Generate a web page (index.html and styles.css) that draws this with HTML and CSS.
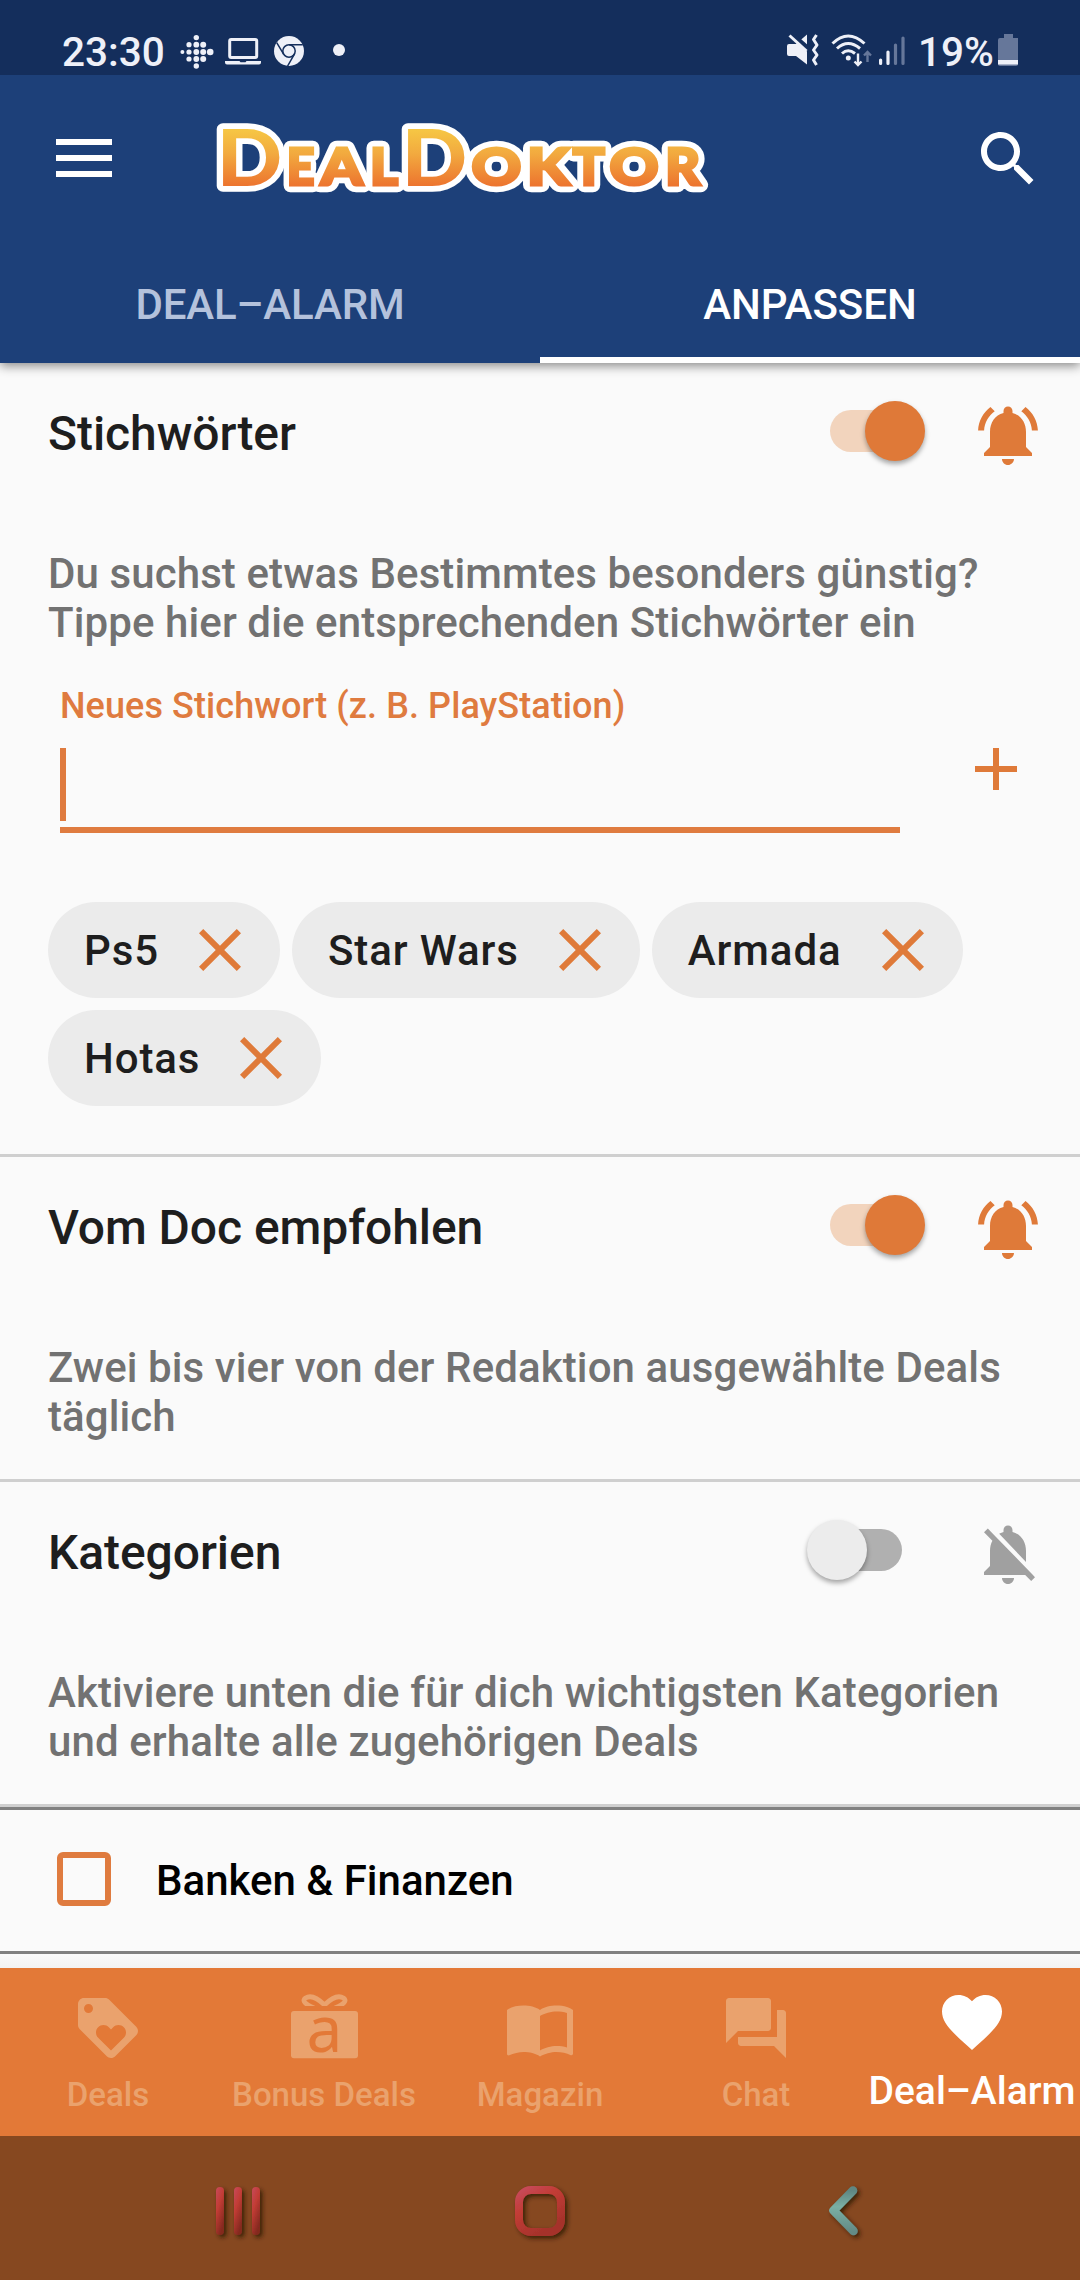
FILE: index.html
```html
<!DOCTYPE html>
<html lang="de">
<head>
<meta charset="utf-8">
<title>DealDoktor</title>
<link rel="stylesheet" href="styles.css">
</head>
<body>
<div class="screen">
  <header class="header">
    <div class="status">
      <span class="clock">23:30</span>
      <svg class="st-fitbit" width="34" height="36" viewBox="0 0 34 36" fill="#eef0f8">
        <circle cx="2.4" cy="18" r="2"/><circle cx="9" cy="10.7" r="2.6"/><circle cx="9" cy="18" r="2.6"/><circle cx="9" cy="25" r="2.6"/>
        <circle cx="16.3" cy="3.6" r="2.7"/><circle cx="16.3" cy="10.7" r="2.9"/><circle cx="16.3" cy="18" r="2.9"/><circle cx="16.3" cy="25" r="2.9"/><circle cx="16.3" cy="32" r="2.7"/>
        <circle cx="23.2" cy="10.7" r="3"/><circle cx="23.2" cy="18" r="3"/><circle cx="23.2" cy="25" r="3"/><circle cx="30.2" cy="18" r="3.3"/>
      </svg>
      <svg class="st-laptop" width="36" height="28" viewBox="0 0 36 28">
        <rect x="4.7" y="1.5" width="27" height="18" rx="1.5" fill="none" stroke="#eef0f8" stroke-width="3"/>
        <path d="M0 23h14.5l1 1.2h5l1-1.2H36v1.5a2 2 0 0 1-2 2H2a2 2 0 0 1-2-2z" fill="#eef0f8"/>
      </svg>
      <svg class="st-chrome" width="30" height="30" viewBox="0 0 30 30">
        <circle cx="15" cy="15" r="15" fill="#eef0f8"/>
        <g fill="none" stroke="#142e5c" stroke-width="1.5"><circle cx="15" cy="15" r="6.2"/><path d="M15 8.8H28.8M9.6 18.1 2.7 6.6M20.4 18.1 13.6 30"/></g>
      </svg>
      <span class="st-dot"></span>
      <div class="status-right">
        <svg width="32" height="32" viewBox="0 0 32 32">
          <path d="M0 12q0-2 2-2h7l11-9.500v30L9 22H2q-2 0-2-2z" fill="#eef0f8"/>
          <path d="M4 0 23 16.500" stroke="#142e5c" stroke-width="5.500"/>
          <path d="M2.500 1.500 19.500 17" stroke="#eef0f8" stroke-width="3"/>
          <path d="M29.500 1 26.500 5.500 30 11 26.500 16 30 21 26.500 26 29.500 31" fill="none" stroke="#eef0f8" stroke-width="3" stroke-linejoin="round"/>
        </svg>
        <svg class="st-wifi" width="42" height="34" viewBox="0 0 42 34">
          <g fill="none" stroke="#eef0f8" stroke-width="3"><path d="M1.500 9.500Q17-5.500 33.500 9.500M6 14.500Q17 4.500 29 14.500M11 19.500Q17 14 24 19.500"/></g>
          <circle cx="17.300" cy="24" r="2.500" fill="#eef0f8"/>
          <path d="M27 19.500V31M23.500 27.500l3.500 3.500 3.500-3.500" fill="none" stroke="#eef0f8" stroke-width="2.400"/>
          <path d="M36.500 28V18M33 21.500l3.500-3.500 3.500 3.500" fill="none" stroke="#66779a" stroke-width="2.400"/>
        </svg>
        <svg class="st-signal" width="28" height="30" viewBox="0 0 28 30" stroke-linecap="round" stroke-width="3.200">
          <path d="M2.600 24v3.500M10 16v11.500" stroke="#eef0f8"/><path d="M17.500 9v18.500M25 2v25.500" stroke="#66779a"/>
        </svg>
        <span class="percent">19%</span>
        <svg class="st-battery" width="20" height="32" viewBox="0 0 20 32">
          <path d="M6 0h9v4h5v26q0 2-2 2H2q-2 0-2-2V6q0-2 2-2h4z" fill="#66779a"/><rect y="26" width="20" height="4.500" fill="#eef0f8"/>
        </svg>
      </div>
    </div>
    <div class="appbar">
      <svg class="menu" width="56" height="38" viewBox="0 0 56 38" fill="#fff"><path d="M0 0h56v6H0zM0 16h56v6H0zM0 32h56v6H0z"/></svg>
      <svg class="logo" width="500" height="80" viewBox="0 0 500 80">
        <defs>
          <linearGradient id="gold" gradientUnits="userSpaceOnUse" x1="0" y1="10" x2="0" y2="69"><stop offset="0" stop-color="#f6c644"/><stop offset=".4" stop-color="#f2aa3f"/><stop offset="1" stop-color="#ec6f2d"/></linearGradient>
          <g id="initials" class="initials">
            <text x=".6" y="66" textLength="65.800" lengthAdjust="spacingAndGlyphs">D</text>
            <text x="185.600" y="66" textLength="65.800" lengthAdjust="spacingAndGlyphs">D</text>
          </g>
          <g id="letters" class="letters">
            <text x="70.800" y="64.500" textLength="27.700" lengthAdjust="spacingAndGlyphs">E</text>
            <text x="104.800" y="64.500" textLength="42" lengthAdjust="spacingAndGlyphs">A</text>
            <text x="154" y="64.500" textLength="28" lengthAdjust="spacingAndGlyphs">L</text>
            <text x="255.500" y="64.500" textLength="49.800" lengthAdjust="spacingAndGlyphs">O</text>
            <text x="311" y="64.500" textLength="42.500" lengthAdjust="spacingAndGlyphs">K</text>
            <text x="356.800" y="64.500" textLength="32" lengthAdjust="spacingAndGlyphs">T</text>
            <text x="393.500" y="64.500" textLength="49.200" lengthAdjust="spacingAndGlyphs">O</text>
            <text x="449.200" y="64.500" textLength="35" lengthAdjust="spacingAndGlyphs">R</text>
          </g>
        </defs>
        <g fill="#fff" stroke="#fff" stroke-linejoin="round"><use href="#initials" stroke-width="11.500"/><use href="#letters" stroke-width="14.500"/></g>
        <use href="#initials" fill="url(#gold)"/>
        <use href="#letters" fill="url(#gold)" stroke="url(#gold)" stroke-width="3"/>
      </svg>
      <svg class="icon search" viewBox="0 0 24 24"><path d="M15.500 14h-.79l-.28-.27C15.410 12.590 16 11.110 16 9.500 16 5.910 13.090 3 9.500 3S3 5.910 3 9.500 5.910 16 9.500 16c1.610 0 3.090-.59 4.230-1.570l.27.28v.79l5 4.990L20.490 19l-4.990-5zm-6 0C7.010 14 5 11.990 5 9.500S7.010 5 9.500 5 14 7.010 14 9.500 11.990 14 9.500 14z"/></svg>
    </div>
    <nav class="tabs">
      <div class="tab"><span class="t-deal">DEAL–ALARM</span></div>
      <div class="tab active"><span>ANPASSEN</span></div>
    </nav>
  </header>

  <main class="content">
    <section class="section s1">
      <div class="head"><h2>Stichwörter</h2><span class="switch on"><i></i></span>
        <svg class="icon bell" viewBox="0 0 24 24"><path d="M7.580 4.080L6.150 2.650C3.750 4.480 2.170 7.300 2.030 10.500h2c.15-2.650 1.510-4.970 3.550-6.420zm12.390 6.420h2c-.15-3.200-1.730-6.020-4.120-7.850l-1.420 1.430c2.020 1.450 3.390 3.770 3.540 6.420zM18 11c0-3.070-1.640-5.640-4.500-6.320V4c0-.83-.67-1.500-1.500-1.500s-1.500.67-1.500 1.500v.68C7.630 5.360 6 7.920 6 11v5l-2 2v1h16v-1l-2-2v-5zm-6 11c.14 0 .27-.01.4-.04.65-.14 1.180-.58 1.440-1.180.1-.24.150-.500.150-.780h-4c.01 1.100.9 2 2.010 2z"/></svg></div>
      <p>Du suchst etwas Bestimmtes besonders günstig?<br>Tippe hier die entsprechenden Stichwörter ein</p>
      <div class="entry">
        <div class="field"><label>Neues Stichwort (z. B. PlayStation)</label><span class="caret"></span></div>
        <svg class="icon add" viewBox="0 0 24 24"><path d="M19 13h-6v6h-2v-6H5v-2h6V5h2v6h6v2z"/></svg>
      </div>
      <div class="chips">
        <span class="chip">Ps5<svg class="icon" viewBox="0 0 24 24"><path d="M19 6.410L17.590 5 12 10.590 6.410 5 5 6.410 10.590 12 5 17.590 6.410 19 12 13.410 17.590 19 19 17.590 13.410 12z"/></svg></span>
        <span class="chip">Star Wars<svg class="icon" viewBox="0 0 24 24"><path d="M19 6.410L17.590 5 12 10.590 6.410 5 5 6.410 10.590 12 5 17.590 6.410 19 12 13.410 17.590 19 19 17.590 13.410 12z"/></svg></span>
        <span class="chip">Armada<svg class="icon" viewBox="0 0 24 24"><path d="M19 6.410L17.590 5 12 10.590 6.410 5 5 6.410 10.590 12 5 17.590 6.410 19 12 13.410 17.590 19 19 17.590 13.410 12z"/></svg></span>
        <span class="chip">Hotas<svg class="icon" viewBox="0 0 24 24"><path d="M19 6.410L17.590 5 12 10.590 6.410 5 5 6.410 10.590 12 5 17.590 6.410 19 12 13.410 17.590 19 19 17.590 13.410 12z"/></svg></span>
      </div>
    </section>
    <section class="section s2">
      <div class="head"><h2>Vom Doc empfohlen</h2><span class="switch on"><i></i></span>
        <svg class="icon bell" viewBox="0 0 24 24"><path d="M7.580 4.080L6.150 2.650C3.750 4.480 2.170 7.300 2.030 10.500h2c.15-2.650 1.510-4.970 3.550-6.420zm12.390 6.420h2c-.15-3.200-1.730-6.020-4.120-7.850l-1.420 1.430c2.020 1.450 3.390 3.770 3.540 6.420zM18 11c0-3.070-1.640-5.640-4.500-6.320V4c0-.83-.67-1.500-1.500-1.500s-1.500.67-1.500 1.500v.68C7.630 5.360 6 7.920 6 11v5l-2 2v1h16v-1l-2-2v-5zm-6 11c.14 0 .27-.01.4-.04.65-.14 1.180-.58 1.440-1.180.1-.24.150-.500.150-.780h-4c.01 1.100.9 2 2.010 2z"/></svg></div>
      <p>Zwei bis vier von der Redaktion ausgewählte Deals<br>täglich</p>
    </section>
    <section class="section s3">
      <div class="head"><h2>Kategorien</h2><span class="switch"><i></i></span>
        <svg class="icon bell muted" viewBox="0 0 24 24"><path d="M20 18.690L7.840 6.140 5.270 3.490 4 4.760l2.800 2.800v.01c-.52.99-.8 2.160-.8 3.420v5l-2 2v1h13.730l2 2L21 19.720l-1-1.030zM12 22c1.110 0 2-.89 2-2h-4c0 1.110.89 2 2 2zm6-7.320V11c0-3.080-1.640-5.640-4.500-6.320V4c0-.83-.67-1.500-1.500-1.500s-1.500.67-1.500 1.500v.68c-.15.03-.29.08-.42.12-.1.03-.2.07-.3.11h-.01c-.01 0-.01 0-.02.01-.23.09-.46.2-.68.31 0 0-.01 0-.01.01L18 14.680z"/></svg></div>
      <p>Aktiviere unten die für dich wichtigsten Kategorien<br>und erhalte alle zugehörigen Deals</p>
    </section>
    <div class="category"><span class="checkbox"></span><span class="cat-name">Banken &amp; Finanzen</span></div>
    <div class="gap"></div>
  </main>

  <nav class="bottom">
    <div class="item"><svg class="icon" viewBox="0 0 24 24"><path d="M21.410 11.580l-9-9C12.050 2.220 11.550 2 11 2H4c-1.100 0-2 .9-2 2v7c0 .55.22 1.050.59 1.420l9 9c.36.36.86.58 1.410.58.55 0 1.050-.22 1.410-.59l7-7c.37-.36.59-.86.59-1.410 0-.55-.23-1.060-.59-1.420zM5.500 7C4.670 7 4 6.330 4 5.500S4.670 4 5.500 4 7 4.670 7 5.500 6.330 7 5.500 7zm11.770 8.270L13 19.540l-4.270-4.270C8.280 14.810 8 14.190 8 13.500c0-1.380 1.120-2.500 2.500-2.500.69 0 1.320.28 1.770.74l.73.72.73-.73c.45-.45 1.080-.73 1.770-.73 1.380 0 2.500 1.120 2.500 2.500 0 .69-.28 1.320-.73 1.770z"/></svg><span class="lb">Deals</span></div>
    <div class="item"><svg class="icon gift" viewBox="0 0 72 72">
      <clipPath id="bow"><path d="M0 0h72v14H0z"/></clipPath>
      <path d="M6 19h61q3 0 3 3v41.300q0 3-3 3H6q-3 0-3-3V22q0-3 3-3z"/>
      <path d="M26 16Q12 10 17.500 6 25 1.500 36.500 13 48 1.500 55.500 6 61 10 47 16" fill="none" stroke="#eaa26d" stroke-width="4.800" clip-path="url(#bow)"/>
      <text x="36.500" y="59.500" class="gift-a">a</text></svg><span class="lb">Bonus Deals</span></div>
    <div class="item"><svg class="icon" viewBox="0 0 24 24"><path d="M21 5c-1.110-.35-2.330-.5-3.500-.5-1.950 0-4.050.4-5.500 1.500-1.450-1.100-3.550-1.500-5.500-1.500S2.450 4.900 1 6v14.650c0 .25.25.5.5.5.1 0 .15-.05.25-.05C3.100 20.450 5.050 20 6.500 20c1.950 0 4.050.4 5.500 1.500 1.350-.85 3.800-1.500 5.500-1.500 1.650 0 3.350.3 4.750 1.050.1.050.150.050.250.050.25 0 .5-.25.5-.5V6c-.6-.45-1.250-.75-2-1zm0 13.500c-1.100-.35-2.300-.5-3.500-.5-1.700 0-4.150.65-5.500 1.500V8c1.350-.85 3.800-1.500 5.500-1.500 1.200 0 2.400.15 3.500.5v11.500z"/></svg><span class="lb">Magazin</span></div>
    <div class="item"><svg class="icon" viewBox="0 0 24 24"><path d="M21 6h-2v9H6v2c0 .55.45 1 1 1h11l4 4V7c0-.55-.45-1-1-1zm-4 6V3c0-.55-.45-1-1-1H3c-.55 0-1 .45-1 1v14l4-4h10c.55 0 1-.45 1-1z"/></svg><span class="lb">Chat</span></div>
    <div class="item current"><svg class="icon" viewBox="0 0 24 24"><path d="M12 21.350l-1.450-1.320C5.400 15.360 2 12.280 2 8.500 2 5.420 4.420 3 7.500 3c1.740 0 3.410.81 4.500 2.090C13.090 3.810 14.760 3 16.500 3 19.580 3 22 5.420 22 8.500c0 3.780-3.400 6.860-8.550 11.540L12 21.350z"/></svg><span class="lb">Deal–Alarm</span></div>
  </nav>

  <footer class="sysnav">
    <svg width="1080" height="144" viewBox="0 0 1080 144">
      <defs>
        <linearGradient id="red" x1="0" y1="0" x2=".5" y2="1"><stop offset="0" stop-color="#c74a5b"/><stop offset=".45" stop-color="#c23c35"/><stop offset="1" stop-color="#84291f"/></linearGradient>
        <linearGradient id="home" x1="0" y1="0" x2=".6" y2="1"><stop offset="0" stop-color="#c74a5b"/><stop offset=".4" stop-color="#c23c35"/><stop offset="1" stop-color="#a5322b"/></linearGradient>
        <linearGradient id="teal" x1="0" y1="0" x2="0" y2="1"><stop offset="0" stop-color="#5f8782"/><stop offset=".4" stop-color="#7ab0a4"/><stop offset="1" stop-color="#648b86"/></linearGradient>
        <filter id="drop" x="-30%" y="-30%" width="170%" height="170%"><feDropShadow dx="2.500" dy="2.500" stdDeviation="2" flood-color="#2a1204" flood-opacity=".8"/></filter>
      </defs>
      <g filter="url(#drop)">
        <g fill="url(#red)"><rect x="216" y="51" width="8" height="48" rx="4"/><rect x="234" y="51" width="8" height="48" rx="4"/><rect x="252" y="51" width="8" height="48" rx="4"/></g>
        <rect x="519" y="54" width="42" height="42" rx="12" fill="none" stroke="url(#home)" stroke-width="8"/>
        <path d="M853 54.500 833.500 74.500 853.500 95" fill="none" stroke="url(#teal)" stroke-width="8.500" stroke-linecap="round" stroke-linejoin="round"/>
      </g>
    </svg>
  </footer>
</div>
</body>
</html>
```
FILE: styles.css
```css
* { box-sizing: border-box; }
body { margin: 0; background: #fafafa; font-family: Roboto, sans-serif; font-weight: 500; }
svg { display: block; flex: none; }
.screen { width: 1080px; height: 2280px; display: flex; flex-direction: column; overflow: hidden; }
.icon { width: 72px; height: 72px; fill: #df7a39; }

.header { height: 363px; background: #1d4079; position: relative; z-index: 1; box-shadow: 0 3px 10px rgba(0,0,0,.45); display: flex; flex-direction: column; }
.status { height: 75px; background: #142e5c; color: #eef0f8; display: flex; align-items: flex-start; padding: 34px 62px 0 62px; font-size: 40.5px; }
.clock { line-height: 36px; width: 118px; white-space: nowrap; }
.st-laptop { margin: 4px 0 0 11px; }
.st-chrome { margin: 2px 0 0 13px; }
.st-dot { width: 12px; height: 12px; border-radius: 50%; background: #eef0f8; margin: 10px 0 0 29px; }
.status-right { margin-left: auto; display: flex; align-items: flex-start; }
.st-wifi { margin-left: 12px; }
.st-signal { margin: 2px 0 0 5px; }
.percent { line-height: 36px; margin-left: 12px; width: 77px; white-space: nowrap; }
.st-battery { margin-left: 3px; }

.appbar { height: 168px; display: flex; align-items: flex-start; padding: 48px 36px 0 56px; }
.menu { margin-top: 16px; }
.logo { margin-left: 104px; margin-top: -3px; overflow: visible; font-family: Lato, sans-serif; font-weight: 900; }
.initials { font-size: 79px; }
.letters { font-size: 51.5px; }
.search { margin-left: auto; fill: #fff; }

.tabs { height: 120px; display: grid; grid-template-columns: 1fr 1fr; }
.tab { display: flex; align-items: center; justify-content: center; font-size: 42px; color: #b4c2dc; padding-top: 3px; }
.tab.active { color: #fff; border-bottom: 6px solid #fff; padding-top: 9px; }
.t-deal { letter-spacing: -.15px; }

.content { flex: 1; display: flex; flex-direction: column; background: #fafafa; }
.section { border-bottom: 3px solid #cfcfcf; padding: 36px 36px 0 48px; }
.s1 { height: 794px; }
.s2 { height: 325px; }
.s3 { height: 325px; }
.head { display: flex; height: 72px; align-items: flex-start; }
h2 { margin: 7px 0 0; font-size: 48px; line-height: 56px; font-weight: 500; color: #1e1e1e; flex: 1; letter-spacing: -.07px; }
.switch { width: 72px; height: 42px; border-radius: 21px; background: #b0b0b0; margin: 11px 70px 0 0; display: flex; align-items: center; justify-content: flex-start; }
.switch i { flex: none; width: 60px; height: 60px; border-radius: 50%; background: #ececec; margin-left: -23px; box-shadow: 0 3px 5px rgba(0,0,0,.35); }
.switch.on { background: #f2d4bd; }
.switch.on i { background: #df7938; margin-left: 35px; }
.muted { fill: #a0a0a0; }
p { margin: 78px 0 0; font-size: 42px; line-height: 49px; color: #727272; white-space: nowrap; letter-spacing: .1px; }

.entry { display: flex; margin: 38px 0 0 12px; height: 148px; }
.field { width: 840px; border-bottom: 6px solid #df7b3f; display: flex; flex-direction: column; }
label { font-size: 36px; line-height: 42px; color: #df7b3f; letter-spacing: .08px; }
.caret { width: 6px; height: 73px; background: #df7b3f; margin-top: 21px; }
.add { margin: 48px 0 0 60px; }

.chips { display: flex; flex-wrap: wrap; gap: 12px; margin-top: 69px; }
.chip { height: 96px; border-radius: 48px; background: #ebebeb; padding: 0 24px 0 36px; display: flex; align-items: center; gap: 25px; font-size: 42px; color: #1e1e1e; letter-spacing: .9px; }

.category { height: 147px; margin-top: 0; flex: none; border-top: 3px solid #808080; border-bottom: 3px solid #808080; display: flex; align-items: center; padding: 0 57px; gap: 45px; font-size: 42px; color: #000; }
.checkbox { width: 54px; height: 54px; border: 6px solid #df7b3f; border-radius: 6px; margin-top: -3px; }
.gap { flex: 1; background: linear-gradient(#fafafa, #f3f3f3); }

.bottom { height: 168px; background: #e37937; display: grid; grid-template-columns: repeat(5, 216px); color: #eaa26d; }
.item { display: flex; flex-direction: column; align-items: center; padding-top: 24px; white-space: nowrap; }
.item .icon { fill: #eaa26d; }
.lb { font-size: 33px; line-height: 42px; margin-top: 10px; }
.item.current { padding-top: 18px; color: #fff; }
.current .icon { fill: #fff; }
.current .lb { font-size: 39px; margin-top: 12px; }
.gift { overflow: visible; }
.item .gift-a { fill: #e37937; font-family: "Noto Sans", sans-serif; font-weight: 400; font-size: 64px; text-anchor: middle; }

.sysnav { height: 144px; background: #864820; }
```
